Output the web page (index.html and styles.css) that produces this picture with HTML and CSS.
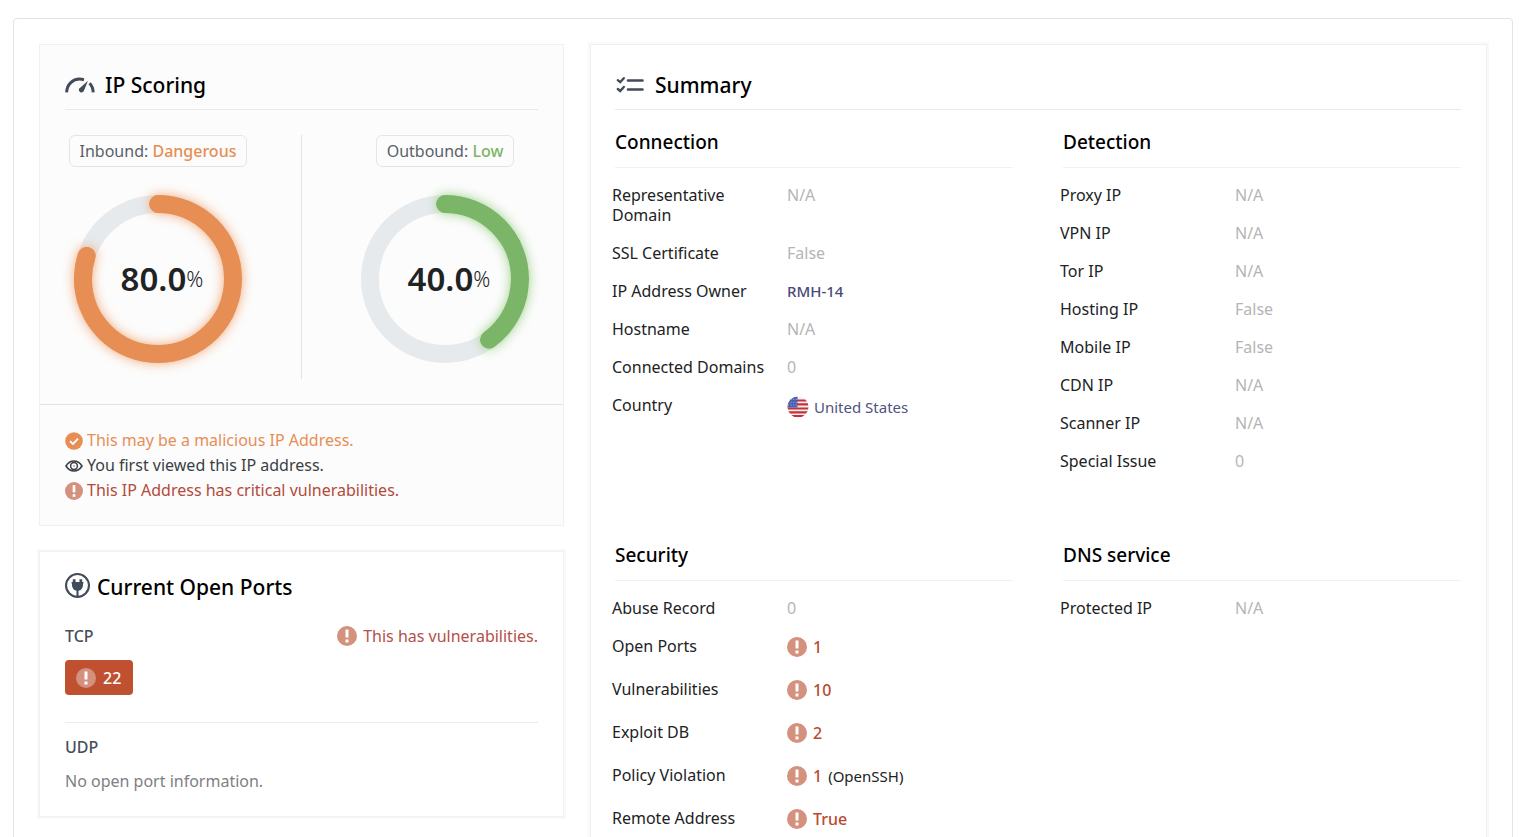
FILE: index.html
```html
<!DOCTYPE html>
<html lang="en">
<head>
<meta charset="utf-8">
<title>IP Report</title>
<link rel="stylesheet" href="styles.css">
</head>
<body>
<svg class="sprite" aria-hidden="true">
  <symbol id="alert" viewBox="0 0 20 20">
    <circle cx="10" cy="10" r="10" fill="#d4917d"/>
    <rect x="8.5" y="3.500" width="3" height="8" fill="#fff"/>
    <rect x="8.500" y="13.500" width="3" height="3" fill="#fff"/>
  </symbol>
</svg>
<main class="report">
  <div class="side">
    <section class="panel scoring">
      <h2 class="title">
        <svg class="icon-gauge" viewBox="0 0 30 16" aria-hidden="true">
          <path d="M1.600 15.400C2 7 8 2.100 14.500 2.100q2 0 4.500.6" fill="none" stroke="#414b5a" stroke-width="3"/>
          <path d="M24.600 6.300Q28 9.800 28.200 15.400" fill="none" stroke="#414b5a" stroke-width="3"/>
          <path d="M23 3.800 18.800 14q-1.200 2-3.500 1.200-2.200-1.200-1.300-3.400z" fill="#414b5a"/>
        </svg>
        IP Scoring
      </h2>
      <div class="scores">
        <div class="score">
          <p class="badge">Inbound: <strong class="danger">Dangerous</strong></p>
          <div class="gauge">
            <svg class="ring ring-danger" viewBox="0 0 168 168" aria-hidden="true">
              <circle class="track" cx="84" cy="84" r="75"/>
              <circle class="value" cx="84" cy="84" r="75" pathLength="100" stroke-dasharray="80 100"/>
            </svg>
            <p class="percent"><b>80.0</b>%</p>
          </div>
        </div>
        <div class="divider"></div>
        <div class="score">
          <p class="badge">Outbound: <strong class="low">Low</strong></p>
          <div class="gauge">
            <svg class="ring ring-low" viewBox="0 0 168 168" aria-hidden="true">
              <circle class="track" cx="84" cy="84" r="75"/>
              <circle class="value" cx="84" cy="84" r="75" pathLength="100" stroke-dasharray="40 100"/>
            </svg>
            <p class="percent"><b>40.0</b>%</p>
          </div>
        </div>
      </div>
      <ul class="notes">
        <li class="danger"><svg class="icon-note" viewBox="0 0 18 18" aria-hidden="true"><circle cx="9" cy="9" r="8.800" fill="#e78e55"/><path d="M5 9.200 8 12l5-5.300" fill="none" stroke="#fff" stroke-width="1.900"/></svg>This may be a malicious IP Address.</li>
        <li><svg class="icon-note" viewBox="0 0 18 18" aria-hidden="true"><path d="M1 9Q4.200 4 9 4t8 5q-3.200 5-8 5T1 9z" fill="none" stroke="#3b3f45" stroke-width="1.600"/><circle cx="9" cy="9" r="3.400" fill="none" stroke="#3b3f45" stroke-width="1.500"/><circle cx="9" cy="9" r=".8" fill="#777"/></svg>You first viewed this IP address.</li>
        <li class="critical"><svg class="icon-note" aria-hidden="true"><use href="#alert"/></svg>This IP Address has critical vulnerabilities.</li>
      </ul>
    </section>
    <section class="panel ports raised">
      <h2 class="title">
        <svg class="icon-plug" viewBox="0 0 24 24" aria-hidden="true">
          <circle cx="12" cy="12" r="11" fill="none" stroke="#414b5a" stroke-width="2"/>
          <path d="M8.800 6v4M15.200 6v4" stroke="#414b5a" stroke-width="2.600"/>
          <path d="M6.300 8.600h11.400v1.500h-.4q.5 5.900-4.300 7v6h-2v-6q-4.800-1.100-4.300-7h-.4z" fill="#414b5a"/>
        </svg>
        Current Open Ports
      </h2>
      <div class="port-head">
        <h3 class="protocol">TCP</h3>
        <p class="flag-note"><svg class="icon-alert" aria-hidden="true"><use href="#alert"/></svg>This has vulnerabilities.</p>
      </div>
      <button class="port" type="button"><svg class="icon-alert" aria-hidden="true"><use href="#alert"/></svg>22</button>
      <div class="udp">
        <h3 class="protocol">UDP</h3>
        <p class="empty">No open port information.</p>
      </div>
    </section>
  </div>
  <section class="panel summary raised">
    <h2 class="title">
      <svg class="icon-list" viewBox="0 0 28 18" aria-hidden="true">
        <path d="M12 4.500h14.500M12 13.500h14.500" stroke="#414b5a" stroke-width="2.600" stroke-linecap="round"/>
        <path d="m1.800 4.200 2.400 2 3.600-4M1.800 13l2.400 2 3.600-4" fill="none" stroke="#414b5a" stroke-width="2.400" stroke-linecap="round"/>
      </svg>
      Summary
    </h2>
    <div class="groups">
      <section class="group">
        <h3>Connection</h3>
        <table>
          <tr><th scope="row">Representative Domain</th><td>N/A</td></tr>
          <tr><th scope="row">SSL Certificate</th><td>False</td></tr>
          <tr><th scope="row">IP Address Owner</th><td><a class="owner" href="#">RMH-14</a></td></tr>
          <tr><th scope="row">Hostname</th><td>N/A</td></tr>
          <tr><th scope="row">Connected Domains</th><td>0</td></tr>
          <tr><th scope="row">Country</th><td><a class="country" href="#"><svg class="icon-flag" viewBox="0 0 22 22" aria-hidden="true">
            <clipPath id="round"><circle cx="11" cy="11" r="10.500"/></clipPath>
            <g clip-path="url(#round)">
              <path d="M0 0h22v22H0z" fill="#f0f0f2"/>
              <path d="M0 4.500h22M0 8.300h22M0 12.500h22M0 16.300h22M0 20h22" stroke="#c6303a" stroke-width="2.200"/>
              <path d="M0 0h10.500v11.500H0z" fill="#4a5fae"/>
              <path d="M1 3.500h9M1 6.300h9M1 9h9" stroke="#a9b4dc" stroke-width="1" stroke-dasharray="1 1.600"/>
            </g>
          </svg>United States</a></td></tr>
        </table>
      </section>
      <section class="group">
        <h3>Detection</h3>
        <table>
          <tr><th scope="row">Proxy IP</th><td>N/A</td></tr>
          <tr><th scope="row">VPN IP</th><td>N/A</td></tr>
          <tr><th scope="row">Tor IP</th><td>N/A</td></tr>
          <tr><th scope="row">Hosting IP</th><td>False</td></tr>
          <tr><th scope="row">Mobile IP</th><td>False</td></tr>
          <tr><th scope="row">CDN IP</th><td>N/A</td></tr>
          <tr><th scope="row">Scanner IP</th><td>N/A</td></tr>
          <tr><th scope="row">Special Issue</th><td>0</td></tr>
        </table>
      </section>
      <section class="group">
        <h3>Security</h3>
        <table>
          <tr><th scope="row">Abuse Record</th><td>0</td></tr>
          <tr><th scope="row">Open Ports</th><td><span class="hit"><svg class="icon-alert" aria-hidden="true"><use href="#alert"/></svg>1</span></td></tr>
          <tr><th scope="row">Vulnerabilities</th><td><span class="hit"><svg class="icon-alert" aria-hidden="true"><use href="#alert"/></svg>10</span></td></tr>
          <tr><th scope="row">Exploit DB</th><td><span class="hit"><svg class="icon-alert" aria-hidden="true"><use href="#alert"/></svg>2</span></td></tr>
          <tr><th scope="row">Policy Violation</th><td><span class="hit"><svg class="icon-alert" aria-hidden="true"><use href="#alert"/></svg>1 <span class="detail">(OpenSSH)</span></span></td></tr>
          <tr><th scope="row">Remote Address</th><td><span class="hit"><svg class="icon-alert" aria-hidden="true"><use href="#alert"/></svg>True</span></td></tr>
        </table>
      </section>
      <section class="group">
        <h3>DNS service</h3>
        <table>
          <tr><th scope="row">Protected IP</th><td>N/A</td></tr>
        </table>
      </section>
    </div>
  </section>
</main>
</body>
</html>
```

FILE: styles.css
```css
* {
  box-sizing: border-box;
}

body {
  height: 100vh;
  margin: 0;
  padding: 18px 12px 0 13px;
  overflow: hidden;
  background: #fff;
  color: #212224;
  font: 16px/20px "Noto Sans", sans-serif;
}

h2, h3, p, ul {
  margin: 0;
  padding: 0;
}

svg {
  flex: none;
}

a {
  text-decoration: none;
}

.sprite {
  position: absolute;
  width: 0;
  height: 0;
}

.report {
  display: grid;
  grid-template-columns: 525fr 897fr;
  gap: 26px;
  padding: 25px 25px 40px;
  border: 1px solid #e2e3e4;
  border-radius: 4px;
}

.side {
  display: flex;
  flex-direction: column;
  gap: 25px;
}

.panel {
  border: 1px solid #f0f0f0;
}

.raised {
  box-shadow: 0 0 0 2px #f9f9f9;
}

.title {
  display: flex;
  align-items: center;
  gap: 10px;
  color: #000;
  font-size: 21px;
  font-weight: 500;
  line-height: 28px;
}

/* Scoring */
.scoring {
  background: #fcfcfc;
}

.scoring .title {
  margin: 0 25px;
  padding: 26px 0 10px;
  border-bottom: 1px solid #e8e9ea;
}

.icon-gauge {
  width: 30px;
  height: 16px;
}

.scores {
  display: grid;
  grid-template-columns: 1fr 1px 1fr;
  gap: 50px;
  padding: 25px;
}

.divider {
  background: #e2e3e4;
}

.score {
  display: flex;
  flex-direction: column;
  align-items: center;
  gap: 28px;
  padding-bottom: 16px;
}

.badge {
  padding: 5px 10px;
  border: 1px solid #e4e5e6;
  border-radius: 6px;
  color: #5a6068;
  white-space: nowrap;
}

.badge strong {
  font-weight: 500;
}

.danger,
.badge .danger {
  color: #e78e55;
}

.badge .low {
  color: #7bb567;
}

.gauge {
  display: grid;
  place-items: center;
}

.gauge > * {
  grid-area: 1 / 1;
}

.ring {
  width: 168px;
  height: 168px;
  overflow: visible;
  transform: rotate(-90deg);
}

.ring circle {
  fill: none;
  stroke-width: 18;
}

.ring .track {
  stroke: #e6eaed;
}

.ring .value {
  stroke-linecap: round;
}

.ring-danger .value {
  stroke: #e78e55;
  filter: drop-shadow(0 0 6px #f0a878);
}

.ring-low .value {
  stroke: #7bb567;
  filter: drop-shadow(0 0 6px #9bd088);
}

.percent {
  display: flex;
  align-items: center;
  padding-left: 8px;
  font-size: 21px;
  font-weight: 300;
  line-height: 40px;
}

.percent b {
  font-size: 33px;
  font-weight: 600;
}

.notes {
  padding: 23px 25px 22px;
  border-top: 1px solid #e2e3e4;
  color: #3b3f45;
  list-style: none;
  line-height: 25px;
}

.notes li {
  display: flex;
  align-items: center;
  gap: 4px;
}

.icon-note {
  width: 18px;
  height: 18px;
}

.critical {
  color: #b34a3a;
}

/* Ports */
.ports {
  padding: 21px 25px 25px;
}

.ports .title {
  align-items: flex-start;
  gap: 7px;
}

.icon-plug {
  width: 25px;
  height: 25px;
}

.icon-alert {
  width: 20px;
  height: 20px;
}

.port-head {
  display: flex;
  align-items: center;
  justify-content: space-between;
  padding: 25px 0 14px;
}

.protocol {
  color: #454f5b;
  font-size: 16px;
  font-weight: 500;
}

.flag-note {
  display: flex;
  align-items: center;
  gap: 6px;
  color: #b3504a;
}

.port {
  display: flex;
  align-items: center;
  gap: 7px;
  height: 35px;
  padding: 0 12px 0 11px;
  border: 0;
  border-radius: 4px;
  background: #bf5030;
  color: #fff;
  font: inherit;
  font-weight: 500;
}

.udp {
  display: grid;
  gap: 14px;
  margin-top: 27px;
  padding-top: 14px;
  border-top: 1px solid #ececee;
}

.empty {
  color: #7e8083;
}

/* Summary */
.summary {
  padding: 26px 25px 30px 21px;
}

.summary .title {
  margin-left: 3px;
  padding-bottom: 10px;
  border-bottom: 1px solid #e8e9ea;
}

.icon-list {
  width: 30px;
  height: 18px;
}

.groups {
  display: grid;
  grid-template-columns: 1fr 1fr;
  column-gap: 47px;
  row-gap: 63px;
  padding-top: 20px;
}

.group h3 {
  margin: 0 0 8px 3px;
  padding-bottom: 12px;
  border-bottom: 1px solid #f1f1f2;
  color: #000;
  font-size: 19px;
  font-weight: 500;
  line-height: 25px;
}

table {
  border-collapse: collapse;
}

th,
td {
  padding: 9px 0;
  vertical-align: top;
}

th {
  width: 175px;
  padding-right: 15px;
  font-weight: 400;
  text-align: left;
}

td {
  color: #b5b5b5;
}

.owner {
  color: #4a4a78;
  font-size: 15px;
  font-weight: 500;
}

.country {
  display: flex;
  align-items: center;
  gap: 5px;
  color: #4f5380;
  font-size: 15px;
  line-height: 24px;
}

.icon-flag {
  width: 22px;
  height: 22px;
}

.hit {
  display: flex;
  align-items: center;
  gap: 6px;
  padding: 1px 0 4px;
  color: #b94a30;
  font-weight: 500;
}

.detail {
  color: #212224;
  font-size: 15px;
  font-weight: 400;
}
```
